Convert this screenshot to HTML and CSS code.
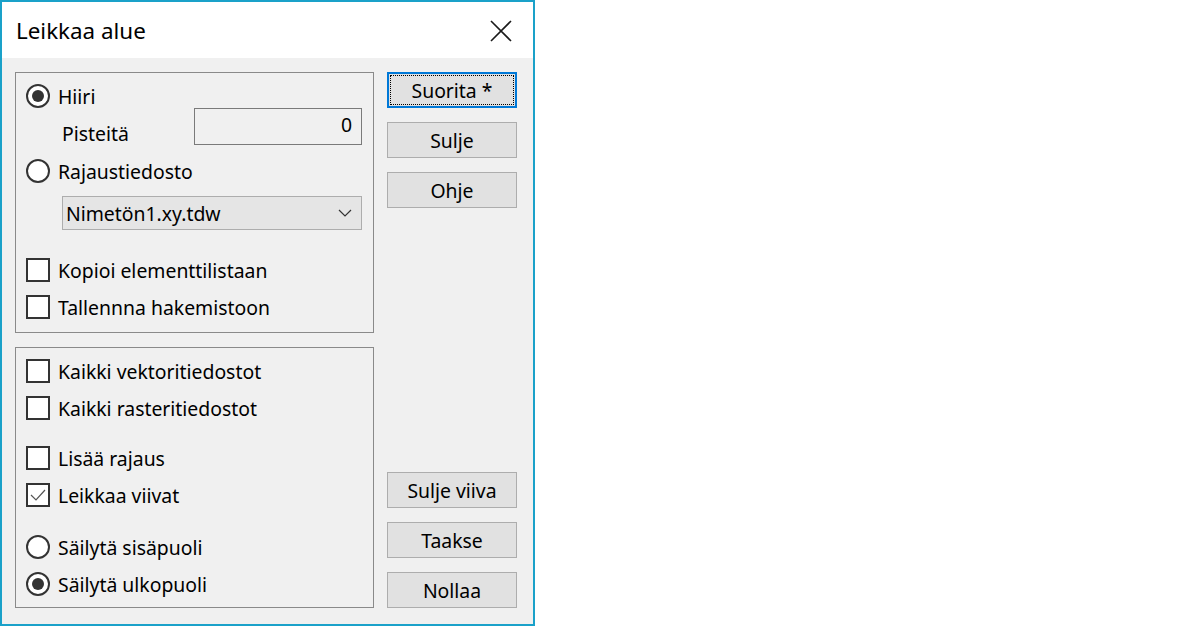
FILE: index.html
```html
<!DOCTYPE html>
<html lang="fi">

<head>
    <meta charset="UTF-8">
    <title>Leikkaa alue</title>
    <link rel="stylesheet" href="styles.css">
</head>

<body>

    <div class="dialog">
        <div class="title-bar">
            <span class="title">Leikkaa alue</span>
            <svg class="close-icon" width="24" height="24" viewBox="0 0 24 24">
                <path d="M2 2 L22 22 M22 2 L2 22" stroke="#1a1a1a" stroke-width="1.6" fill="none" />
            </svg>
        </div>

        <div class="dialog-body">
            <div class="groups">
                <div class="group-box">
                    <label class="option row-hiiri">
                        <span class="radio checked"></span>
                        <span>Hiiri</span>
                    </label>
                    <div class="points-row">
                        <span class="points-label">Pisteitä</span>
                        <div class="textbox">0</div>
                    </div>
                    <label class="option row-file">
                        <span class="radio"></span>
                        <span>Rajaustiedosto</span>
                    </label>
                    <div class="combo">
                        <span>Nimetön1.xy.tdw</span>
                        <svg width="14" height="8" viewBox="0 0 14 8">
                            <path d="M1 1 L7 7 L13 1" stroke="#333" stroke-width="1.2" fill="none" />
                        </svg>
                    </div>
                    <label class="option row-copy">
                        <span class="checkbox"></span>
                        <span>Kopioi elementtilistaan</span>
                    </label>
                    <label class="option row-next">
                        <span class="checkbox"></span>
                        <span>Tallennna hakemistoon</span>
                    </label>
                </div>

                <div class="group-box">
                    <label class="option row-hiiri">
                        <span class="checkbox"></span>
                        <span>Kaikki vektoritiedostot</span>
                    </label>
                    <label class="option row-next">
                        <span class="checkbox"></span>
                        <span>Kaikki rasteritiedostot</span>
                    </label>
                    <label class="option row-section">
                        <span class="checkbox"></span>
                        <span>Lisää rajaus</span>
                    </label>
                    <label class="option row-next">
                        <span class="checkbox checked">
                            <svg width="20" height="20" viewBox="0 0 20 20">
                                <path d="M3 10 L8 15 L17 5" stroke="#555" stroke-width="1.2" fill="none" />
                            </svg>
                        </span>
                        <span>Leikkaa viivat</span>
                    </label>
                    <label class="option row-copy">
                        <span class="radio"></span>
                        <span>Säilytä sisäpuoli</span>
                    </label>
                    <label class="option row-next">
                        <span class="radio checked"></span>
                        <span>Säilytä ulkopuoli</span>
                    </label>
                </div>
            </div>

            <div class="buttons">
                <div class="button-group">
                    <button class="btn btn-default"><span>Suorita *</span></button>
                    <button class="btn">Sulje</button>
                    <button class="btn">Ohje</button>
                </div>
                <div class="button-group">
                    <button class="btn">Sulje viiva</button>
                    <button class="btn">Taakse</button>
                    <button class="btn">Nollaa</button>
                </div>
            </div>
        </div>
    </div>

</body>

</html>
```

FILE: styles.css
```css
:root {
    --frame-color: #1aa1c9;
    --face-color: #f0f0f0;
    --button-color: #e1e1e1;
    --button-border: #adadad;
    --group-border: #8a8a8a;
    --control-dark: #333;
    --text-color: #000;
}

body {
    margin: 0;
    background-color: #fff;
    font-family: "Noto Sans", sans-serif;
    font-size: 19.4px;
    color: var(--text-color);
}

.dialog {
    width: 535px;
    height: 626px;
    box-sizing: border-box;
    border: 2px solid var(--frame-color);
    background-color: var(--face-color);
    display: flex;
    flex-direction: column;
}

.title-bar {
    height: 56px;
    background-color: #fff;
    display: flex;
    align-items: center;
    justify-content: space-between;
    padding: 0 20px 0 14px;
}

.title {
    font-size: 22.4px;
    margin-top: 1px;
}

.close-icon {
    margin-top: 2px;
}

.dialog-body {
    display: flex;
    padding: 14px 0 0 13px;
    gap: 13px;
}

.groups {
    display: flex;
    flex-direction: column;
    gap: 14px;
}

.group-box {
    width: 359px;
    height: 261px;
    box-sizing: border-box;
    border: 1px solid var(--group-border);
    padding: 11px 11px 0 10px;
    display: flex;
    flex-direction: column;
}

.option {
    display: flex;
    align-items: center;
    height: 24px;
    gap: 8px;
}

.row-next {
    margin-top: 13px;
}

.row-file {
    margin-top: 14px;
}

.row-copy {
    margin-top: 28px;
}

.row-section {
    margin-top: 26px;
}

.radio {
    width: 24px;
    height: 24px;
    box-sizing: border-box;
    border: 2px solid var(--control-dark);
    border-radius: 50%;
    background-color: #fff;
    display: flex;
    align-items: center;
    justify-content: center;
}

.radio.checked::after {
    content: "";
    width: 12px;
    height: 12px;
    border-radius: 50%;
    background-color: var(--control-dark);
}

.checkbox {
    width: 24px;
    height: 24px;
    box-sizing: border-box;
    border: 2px solid var(--control-dark);
    background-color: #fff;
    display: flex;
    align-items: center;
    justify-content: center;
}

.points-row {
    display: flex;
    justify-content: space-between;
    height: 37px;
    padding-left: 36px;
}

.points-label {
    align-self: flex-end;
    margin-bottom: -2px;
}

.textbox {
    width: 168px;
    height: 37px;
    box-sizing: border-box;
    border: 1px solid #7a7a7a;
    text-align: right;
    padding: 2px 9px 0 0;
}

.combo {
    margin: 13px 0 0 36px;
    height: 34px;
    box-sizing: border-box;
    border: 1px solid var(--button-border);
    background-color: #e5e5e5;
    display: flex;
    align-items: center;
    justify-content: space-between;
    padding: 0 9px 0 3px;
}

.buttons {
    display: flex;
    flex-direction: column;
    justify-content: space-between;
}

.button-group {
    display: flex;
    flex-direction: column;
    gap: 14px;
}

.btn {
    width: 130px;
    height: 36px;
    box-sizing: border-box;
    border: 1px solid var(--button-border);
    background-color: var(--button-color);
    font-family: inherit;
    font-size: 19.4px;
    color: var(--text-color);
    padding: 0;
}

.btn-default {
    border: 2px solid #0078d7;
    padding: 1px;
}

.btn-default span {
    display: flex;
    align-items: center;
    justify-content: center;
    height: 100%;
    box-sizing: border-box;
    border: 1px dotted #000;
}
```
